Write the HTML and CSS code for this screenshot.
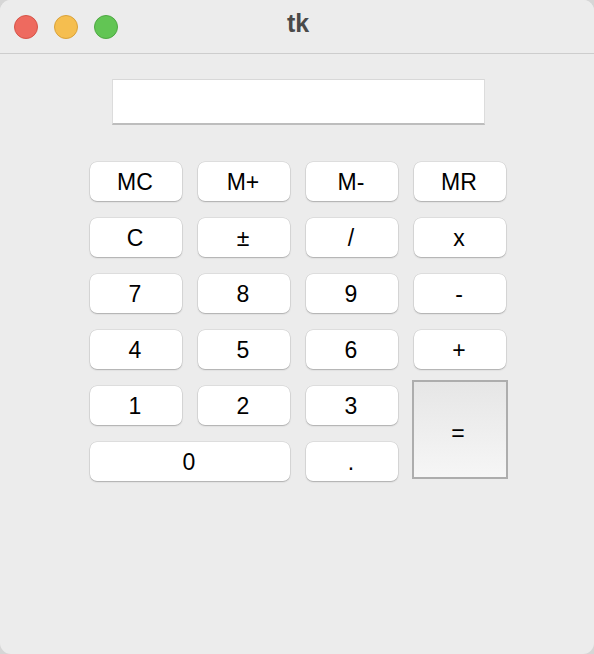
FILE: index.html
```html
<!DOCTYPE html>
<html>
<head>
<meta charset="utf-8">
<link rel="stylesheet" href="styles.css">
</head>
<body>
<div class="window">
  <div class="titlebar">
    <div class="lights">
      <span class="light red"></span>
      <span class="light yellow"></span>
      <span class="light green"></span>
    </div>
    <div class="title">tk</div>
  </div>
  <div class="content">
    <div class="entry"></div>
    <div class="keys">
      <div class="key">MC</div>
      <div class="key">M+</div>
      <div class="key">M-</div>
      <div class="key">MR</div>
      <div class="key">C</div>
      <div class="key">±</div>
      <div class="key">/</div>
      <div class="key">x</div>
      <div class="key">7</div>
      <div class="key">8</div>
      <div class="key">9</div>
      <div class="key">-</div>
      <div class="key">4</div>
      <div class="key">5</div>
      <div class="key">6</div>
      <div class="key">+</div>
      <div class="key">1</div>
      <div class="key">2</div>
      <div class="key">3</div>
      <div class="key equal">=</div>
      <div class="key zero">0</div>
      <div class="key">.</div>
    </div>
  </div>
</div>
</body>
</html>
```
FILE: styles.css
```css
html, body {
  margin: 0;
  padding: 0;
  width: 594px;
  height: 654px;
  background: #d6d6d6;
  overflow: hidden;
}
.window {
  width: 594px;
  height: 654px;
  background: #ececec;
  border-radius: 11px;
  overflow: hidden;
  display: flex;
  flex-direction: column;
  font-family: "Liberation Sans", Arial, sans-serif;
}
.titlebar {
  height: 53px;
  flex: none;
  border-bottom: 1px solid #cdcdcd;
  background: #ececec;
  display: flex;
  align-items: center;
  position: relative;
}
.lights {
  display: flex;
  gap: 16px;
  padding-left: 14px;
  padding-top: 0;
}
.light {
  width: 24px;
  height: 24px;
  border-radius: 50%;
  box-sizing: border-box;
}
.red { background: #ee6a5f; border: 1px solid #d65448; }
.yellow { background: #f5be4f; border: 1px solid #d9a23a; }
.green { background: #62c554; border: 1px solid #4ea843; }
.title {
  position: absolute;
  left: 0;
  right: 0;
  top: 9px;
  text-align: center;
  font-weight: bold;
  font-size: 25px;
  color: #4a4a4a;
  padding-left: 2px;
}
.content {
  display: flex;
  flex-direction: column;
  align-items: center;
  padding-top: 25px;
  padding-left: 2px;
}
.entry {
  width: 373px;
  height: 46px;
  box-sizing: border-box;
  background: #fff;
  border-top: 1px solid #d8d8d8;
  border-left: 1px solid #dcdcdc;
  border-right: 1px solid #dcdcdc;
  border-bottom: 2px solid #bdbdbd;
}
.keys {
  margin-top: 37px;
  display: grid;
  grid-template-columns: repeat(4, 92px);
  grid-auto-rows: 39px;
  column-gap: 16px;
  row-gap: 17px;
}
.key {
  background: #fff;
  border-radius: 7px;
  box-shadow: 0 0 0 0.5px rgba(0,0,0,0.12), 0 1px 1.5px rgba(0,0,0,0.22);
  display: flex;
  align-items: center;
  justify-content: center;
  font-size: 23px;
  color: #000;
  padding: 1px 2px 0 0;
  box-sizing: border-box;
}
.zero {
  grid-column: span 2;
}
.equal {
  grid-column: 4;
  grid-row: 5 / span 2;
  margin: -6px -2px 2px -2px;
  padding: 8px 4px 0 0;
  border-radius: 0;
  box-shadow: none;
  border: 2px solid #adadad;
  background: linear-gradient(#e6e6e6, #f6f6f6);
}
```
